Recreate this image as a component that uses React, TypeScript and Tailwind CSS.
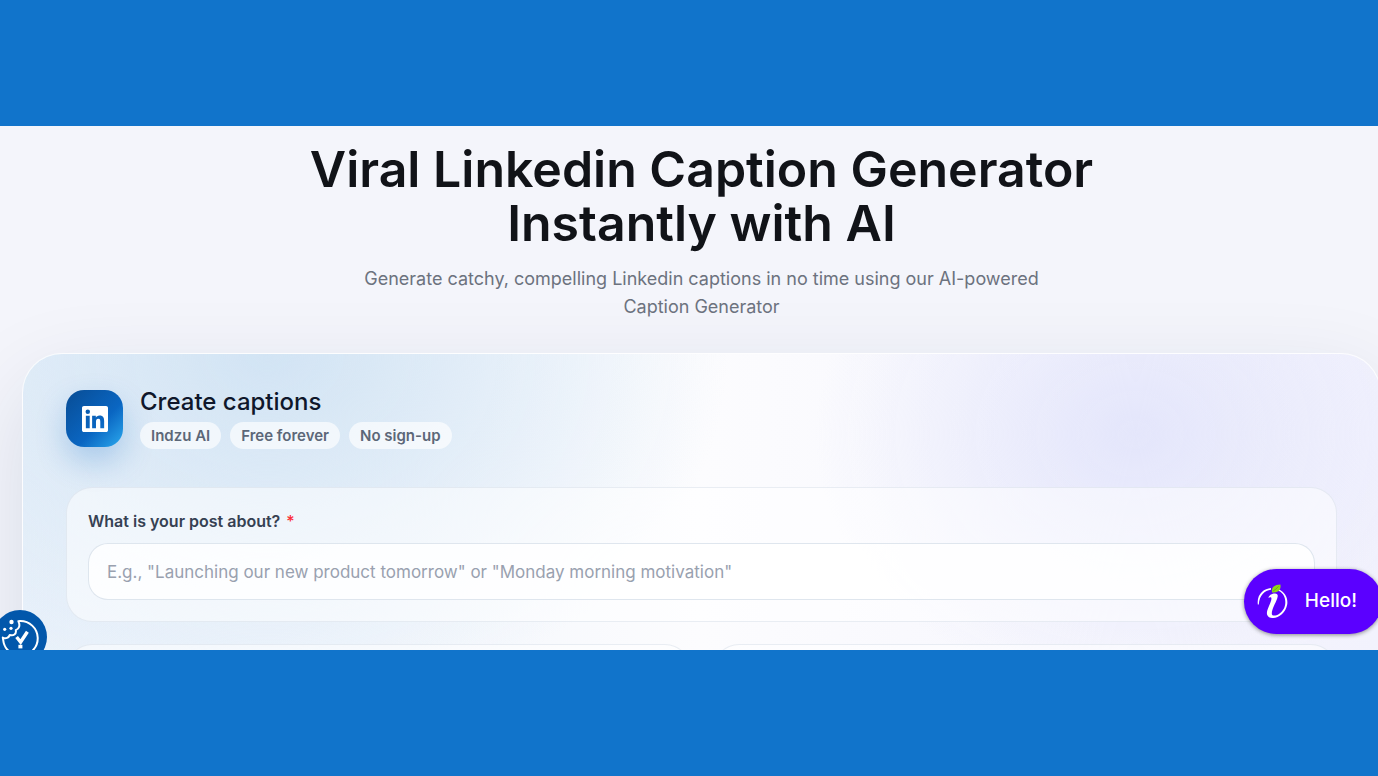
import type { ReactNode } from "react";

const tags = ["Indzu AI", "Free forever", "No sign-up"];

function LinkedinMark() {
  return (
    <svg viewBox="0 0 24 24" className="size-[26px]" fill="white" aria-hidden="true">
      <path d="M20.447 20.452h-3.554v-5.569c0-1.328-.027-3.037-1.852-3.037-1.853 0-2.136 1.445-2.136 2.939v5.667H9.351V9h3.414v1.561h.046c.477-.9 1.637-1.85 3.37-1.85 3.601 0 4.267 2.37 4.267 5.455v6.286zM5.337 7.433a2.062 2.062 0 0 1-2.063-2.065 2.064 2.064 0 1 1 2.063 2.065zm1.782 13.019H3.555V9h3.564v11.452zM22.225 0H1.771C.792 0 0 .774 0 1.729v20.542C0 23.227.792 24 1.771 24h20.451C23.2 24 24 23.227 24 22.271V1.729C24 .774 23.2 0 22.222 0h.003z" />
    </svg>
  );
}

function CookieMark() {
  return (
    <svg viewBox="0 0 54 54" className="size-full" fill="none" aria-hidden="true">
      <path
        d="M27 11 A17.3 17.3 0 1 1 10.2 30 L9.8 27.6 C13 29 15.6 27.8 16.8 25 C20.4 26.2 23.6 24 22.8 20.2 C26.2 18.8 27.4 15.2 25.4 11.2 Z"
        stroke="white"
        strokeWidth="2"
        strokeLinejoin="round"
      />
      <circle cx="18.5" cy="12" r="2.2" fill="white" />
      <circle cx="11.7" cy="19.3" r="1.6" fill="white" />
      <circle cx="18" cy="18.3" r="1.6" fill="white" />
      <path d="M23.6 27 L27.6 32 L34.4 21.8" stroke="white" strokeWidth="3.4" />
      <path d="M25.4 34.8h4v3.6h-4z" fill="white" />
    </svg>
  );
}

function IndzuMark() {
  return (
    <svg viewBox="0 0 32 36" className="h-9 w-8" fill="none" aria-hidden="true">
      <path d="M0.8 20.4 C-0.4 10 7 4.400 14 3.900 L14 5.700 C7.600 6.600 2.400 11 1.800 20.400 Z" fill="white" />
      <path
        d="M21.5 5.300 C28 8 31.200 14 30.200 20.500 C28.800 29 21 34.700 15 33.900 C9.600 33.200 9 29.200 10.800 25 C12.400 20.600 14.600 17 14.400 14.200 C14.300 12.800 12.800 13.200 11.300 13.800 C12.400 10.800 15 9.400 18 9.400 C21 9.400 21.200 11.600 20.200 14.400 C18.600 19 14.800 25 14.800 29.400 C14.800 32.200 18.600 32.200 22 29.900 C27 26.600 28.800 21.600 28.200 16.400 C27.800 12 25.200 8.200 21 6.600 Z"
        fill="white"
      />
      <path d="M15 8.400 C14.200 3 17.600 0.800 23.400 0.600 C24.400 5.400 21.400 9.400 15 8.400 Z" fill="#8fd71a" />
      <path d="M16 7.200 C18 6 20 4 21.600 2.400" stroke="#4d9c12" strokeWidth="0.600" />
    </svg>
  );
}

function Panel({ children, className = "" }: { children?: ReactNode; className?: string }) {
  return (
    <div className={`rounded-[26px] border border-slate-300/40 bg-white/50 p-[21px] ${className}`}>
      {children}
    </div>
  );
}

export default function App() {
  return (
    <div className="flex h-screen flex-col bg-[#1174cb] py-[126px] font-['Inter',sans-serif]">
      <main className="relative min-h-0 flex-1 overflow-hidden bg-[#f4f5fb]">
        <div className="-mr-[3px] ml-[22px] pt-4">
          <header className="flex flex-col items-center text-center">
            <h1 className="max-w-[860px] text-[50px] leading-[54px] font-semibold text-[#111318]">
              Viral Linkedin Caption Generator Instantly with AI
            </h1>
            <p className="mt-[15px] max-w-[700px] text-lg leading-7 text-[#6c727e]">
              Generate catchy, compelling Linkedin captions in no time using our AI-powered Caption Generator
            </p>
          </header>

          <section className="mt-8 rounded-[40px] border border-white/80 bg-[radial-gradient(ellipse_460px_360px_at_18%_0%,#d2e4f4_0%,#d2e4f400_100%),radial-gradient(ellipse_320px_260px_at_82%_80px,#e4e6fb_0%,#e4e6fb00_100%),linear-gradient(90deg,#e9f1fa_0%,#fcfcfe_50%,#f2f2fd_100%)] px-[43px] pt-[34px] pb-11 shadow-[0_30px_90px_rgba(20,40,80,0.12)]">
            <div className="flex items-center gap-[17px]">
              <div className="flex size-[57px] items-center justify-center rounded-[18px] bg-[linear-gradient(135deg,#084c94_0%,#0a66c2_60%,#2ba9ee_100%)] shadow-[0_14px_30px_rgba(10,102,194,0.25)]">
                <LinkedinMark />
              </div>
              <div>
                <h2 className="text-2xl leading-7 font-medium text-slate-900">Create captions</h2>
                <ul className="mt-[6px] flex gap-[9px]">
                  {tags.map((tag) => (
                    <li
                      key={tag}
                      className="rounded-full bg-white/65 px-[11px] text-[15px] leading-[27px] font-semibold text-[#5c6778]"
                    >
                      {tag}
                    </li>
                  ))}
                </ul>
              </div>
            </div>

            <Panel className="mt-[38px]">
              <label htmlFor="topic" className="flex gap-[6px] text-base leading-6 font-semibold text-gray-700">
                What is your post about? <span className="font-medium text-red-500">*</span>
              </label>
              <input
                id="topic"
                type="text"
                placeholder={'E.g., "Launching our new product tomorrow" or "Monday morning motivation"'}
                className="mt-[10px] block h-[57px] w-full rounded-[20px] border border-slate-300/60 bg-white/80 px-[18px] text-[17px] text-gray-700 outline-none placeholder:text-gray-400"
              />
            </Panel>

            <div className="mt-[22px] grid grid-cols-2 gap-[22px]">
              <Panel className="h-32" />
              <Panel className="h-32" />
            </div>
          </section>
        </div>

        <button
          type="button"
          aria-label="Cookie settings"
          className="absolute -bottom-[14px] -left-[7px] size-[54px] rounded-full bg-[#0257ab]"
        >
          <CookieMark />
        </button>
        <button
          type="button"
          className="absolute -right-[4px] bottom-4 flex h-[65px] items-center gap-4 rounded-full bg-[#5b00ff] pr-[25px] pl-[13px] text-[19px] font-medium text-white shadow-[0_1px_4px_rgba(0,0,0,0.45)]"
        >
          <IndzuMark />
          Hello!
        </button>
      </main>
    </div>
  );
}
